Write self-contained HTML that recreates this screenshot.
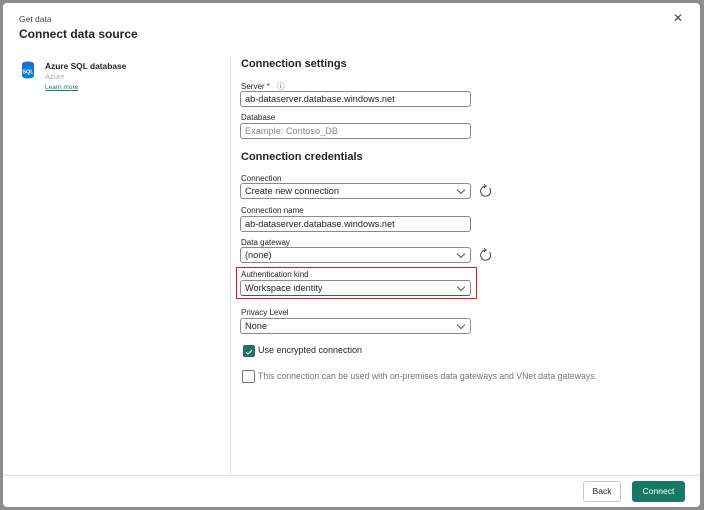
<!DOCTYPE html>
<html><head><style>
*{margin:0;padding:0;box-sizing:border-box}
body{width:704px;height:510px;background:#8c8c8c;font-family:"Liberation Sans",sans-serif;position:relative;overflow:hidden;color:#242424}
.m{position:absolute;left:3px;top:3px;width:697px;height:504px;background:#fff;border-radius:4px}
.a{position:absolute;white-space:nowrap}
.lb{font-size:8px;color:#242424}
.in{position:absolute;left:240px;width:231px;height:16px;border:1px solid #8a8a8a;border-radius:3px;font-size:9.2px;padding:2px 0 0 4px;background:#fff}
.sel::after{content:"";position:absolute;right:6px;top:3px;width:5px;height:5px;border-right:1px solid #555;border-bottom:1px solid #555;transform:rotate(45deg)}
.h{font-size:11px;font-weight:bold;color:#242424}
.ref{position:absolute;left:479px;width:14px;height:14px}
</style></head><body>
<div class="m"></div>
<div class="a" style="left:19px;top:14px;font-size:8.5px;color:#444">Get data</div>
<div class="a" style="left:19px;top:27px;font-size:12px;font-weight:bold">Connect data source</div>
<div class="a" style="left:673px;top:11px;font-size:12px;color:#444">✕</div>
<svg class="a" style="left:21px;top:61px" width="14" height="18" viewBox="0 0 14 18"><ellipse cx="7" cy="3" rx="6" ry="2.5" fill="#1a6fc9"/><rect x="1" y="3" width="12" height="12" fill="#0a78d4"/><ellipse cx="7" cy="15" rx="6" ry="2.5" fill="#0a78d4"/><text x="7" y="12.5" font-size="5.5" font-family="Liberation Sans" font-weight="bold" fill="#fff" text-anchor="middle">SQL</text></svg>
<div class="a" style="left:45px;top:61px;font-size:8.4px;font-weight:bold">Azure SQL database</div>
<div class="a" style="left:45px;top:72px;font-size:7.5px;color:#aaa">Azure</div>
<div class="a" style="left:45px;top:84px;font-size:6.5px;color:#1d7d6a;text-decoration:underline">Learn more</div>
<div class="a" style="left:230px;top:57px;width:1px;height:418px;background:#ddd"></div>
<div class="a" style="left:3px;top:475px;width:697px;height:1px;background:#ddd"></div>

<div class="a h" style="left:241px;top:58px">Connection settings</div>
<div class="a lb" style="left:241px;top:81px">Server <span style="color:#c50f1f">*</span> &nbsp;&nbsp;<span style="font-size:8px;color:#555">ⓘ</span></div>
<div class="in" style="top:91px">ab-dataserver.database.windows.net</div>
<div class="a lb" style="left:241px;top:113px">Database</div>
<div class="in" style="top:123px;color:#888">Example: Contoso_DB</div>
<div class="a h" style="left:241px;top:151px">Connection credentials</div>
<div class="a lb" style="left:241px;top:174px">Connection</div>
<div class="in sel" style="top:183px">Create new connection</div>
<svg class="ref" style="top:184px" viewBox="0 0 14 14"><path d="M10.5 4A5 5 0 1 1 6 2.2" fill="none" stroke="#444" stroke-width="1"/><path d="M5 0.5L7 2.2 5 4" fill="none" stroke="#444" stroke-width="1"/></svg>
<div class="a lb" style="left:241px;top:206px">Connection name</div>
<div class="in" style="top:216px">ab-dataserver.database.windows.net</div>
<div class="a lb" style="left:241px;top:238px">Data gateway</div>
<div class="in sel" style="top:247px">(none)</div>
<svg class="ref" style="top:248px" viewBox="0 0 14 14"><path d="M10.5 4A5 5 0 1 1 6 2.2" fill="none" stroke="#444" stroke-width="1"/><path d="M5 0.5L7 2.2 5 4" fill="none" stroke="#444" stroke-width="1"/></svg>
<div class="a" style="left:236px;top:267px;width:241px;height:32px;border:1px solid #e8141b"></div>
<div class="a lb" style="left:241px;top:270px">Authentication kind</div>
<div class="in sel" style="top:280px;border-bottom:1px solid #1d6b5a">Workspace identity</div>
<div class="a lb" style="left:241px;top:308px">Privacy Level</div>
<div class="in sel" style="top:318px">None</div>
<div class="a" style="left:243px;top:345px;width:12px;height:12px;background:#1f7360;border-radius:2px"><svg width="12" height="12" viewBox="0 0 12 12"><path d="M3 6.2L5 8.2 9 4" fill="none" stroke="#fff" stroke-width="1"/></svg></div>
<div class="a" style="left:258px;top:345px;font-size:9px">Use encrypted connection</div>
<div class="a" style="left:242px;top:370px;width:13px;height:13px;border:1px solid #777;border-radius:2px"></div>
<div class="a" style="left:258px;top:371px;font-size:8.75px;color:#777">This connection can be used with on-premises data gateways and VNet data gateways.</div>

<div class="a" style="left:583px;top:481px;width:38px;height:21px;border:1px solid #c8c8c8;border-radius:3px;font-size:8.5px;text-align:center;line-height:19px">Back</div>
<div class="a" style="left:632px;top:481px;width:53px;height:21px;background:#177964;border-radius:3px;font-size:8.5px;color:#fff;text-align:center;line-height:21px">Connect</div>
</body></html>
